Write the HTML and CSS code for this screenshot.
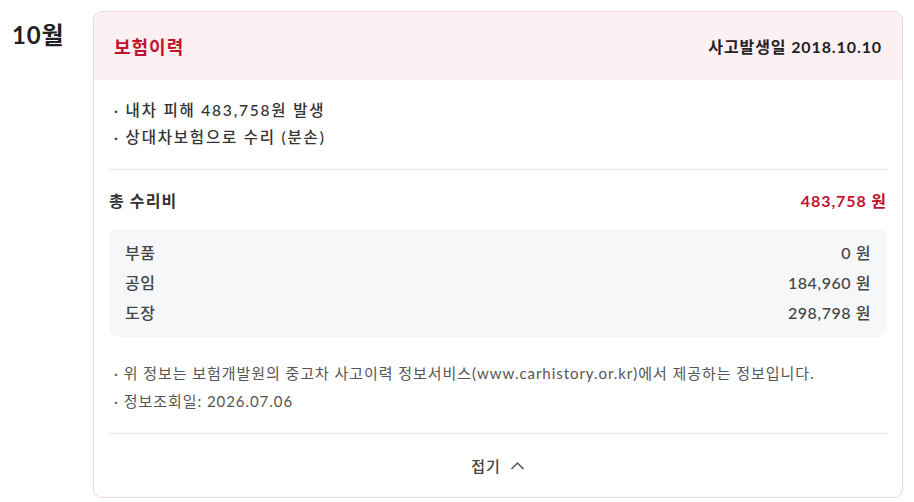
FILE: index.html
```html
<!DOCTYPE html>
<html lang="ko">
<head>
  <meta charset="UTF-8" />
  <title>사고이력</title>
  <link rel="stylesheet" href="styles.css">
</head>
<body>
  <div class="month-row">
    <h2 class="month">10월</h2>

    <div class="card">
      <div class="card-head">
        <span class="card-title">보험이력</span>
        <span class="card-date">사고발생일 2018.10.10</span>
      </div>

      <div class="card-body">
        <ul class="summary">
          <li>· 내차 피해 483,758원 발생</li>
          <li>· 상대차보험으로 수리 (분손)</li>
        </ul>

        <div class="total">
          <span>총 수리비</span>
          <span class="total-price">483,758 원</span>
        </div>

        <div class="detail">
          <div class="detail-row"><span>부품</span><span>0 원</span></div>
          <div class="detail-row"><span>공임</span><span>184,960 원</span></div>
          <div class="detail-row"><span>도장</span><span>298,798 원</span></div>
        </div>

        <ul class="notes">
          <li>· 위 정보는 보험개발원의 중고차 사고이력 정보서비스(www.carhistory.or.kr)에서 제공하는 정보입니다.</li>
          <li>· 정보조회일: 2026.07.06</li>
        </ul>

        <button class="fold" type="button">
          접기
          <svg width="15" height="9" viewBox="0 0 15 9" aria-hidden="true">
            <path d="M1.5 8 L7.5 2 L13.5 8" fill="none" stroke="#555" stroke-width="1.5"/>
          </svg>
        </button>
      </div>
    </div>
  </div>
</body>
</html>
```

FILE: styles.css
```css
body {
  margin: 0;
  padding: 11px 11px 0 12px;
  font-family: Lato, "Noto Sans CJK KR", sans-serif;
  color: #222;
  background: #fff;
}

.month-row {
  display: flex;
  align-items: flex-start;
}

.month {
  width: 81px;
  margin: 5px 0 0 0;
  font-size: 24px;
  font-weight: 700;
  letter-spacing: 0.8px;
  color: #222;
}

.card {
  flex: 1;
  border: 1.5px solid #f2d4da;
  border-radius: 9px;
  overflow: hidden;
}

.card-head {
  display: flex;
  justify-content: space-between;
  align-items: center;
  height: 68px;
  padding: 0 20px;
  background: #fcf0f2;
}

.card-title {
  font-size: 18px;
  font-weight: 700;
  letter-spacing: 1px;
  color: #c3122f;
}

.card-date {
  font-size: 16px;
  font-weight: 700;
  letter-spacing: 0.9px;
  color: #222;
}

.card-body {
  padding: 0 15px;
}

.summary, .notes {
  list-style: none;
  margin: 0;
  padding: 0 5px;
}

.summary {
  padding-top: 17px;
  padding-bottom: 18px;
  border-bottom: 1.5px solid #e1e5ec;
  font-size: 15.5px;
  font-weight: 500;
  letter-spacing: 1.8px;
  line-height: 27px;
  color: #333;
}

.total {
  display: flex;
  justify-content: space-between;
  align-items: center;
  height: 59px;
  font-size: 16px;
  font-weight: 700;
  letter-spacing: 1.1px;
  color: #333;
}

.total-price {
  color: #c3122f;
  letter-spacing: 0.9px;
}

.detail {
  background: #f6f7f9;
  border-radius: 9px;
  padding: 9px 16px;
}

.detail-row {
  display: flex;
  justify-content: space-between;
  line-height: 30px;
  font-size: 16px;
  font-weight: 500;
  letter-spacing: 0.55px;
  color: #444;
}

.notes {
  padding-top: 22px;
  padding-bottom: 18px;
  border-bottom: 1.5px solid #e1e5ec;
  font-size: 15px;
  letter-spacing: 0.95px;
  line-height: 28px;
  color: #555;
}

.fold {
  display: flex;
  align-items: center;
  justify-content: center;
  gap: 9px;
  width: 100%;
  height: 63px;
  border: none;
  background: none;
  font-family: inherit;
  font-size: 15px;
  font-weight: 500;
  letter-spacing: 1px;
  color: #444;
  cursor: pointer;
}
```
